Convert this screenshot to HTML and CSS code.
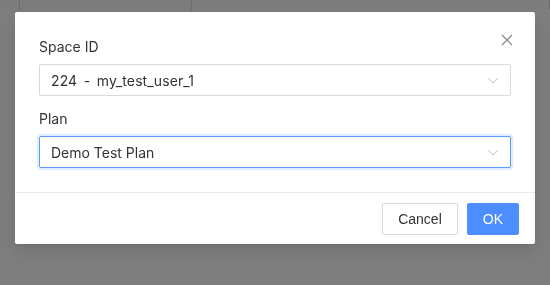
FILE: index.html
```html
<!DOCTYPE html>
<html>
<head>
<title>Select Space</title>
<link rel="stylesheet" href="styles.css">
</head>
<body>
<div class="page">
	<div class="pageHead">
		<div class="cell" style="width:19px"></div>
		<div class="cell" style="width:171px"></div>
		<div class="cell" style="width:358px"></div>
	</div>
</div>
<div class="mask">
	<div class="modal">
		<button class="close" type="button">
			<svg width="12" height="12" viewBox="0 0 12 12"><path d="M1 1L11 11M11 1L1 11" stroke="#8c8c8c" stroke-width="1.3" fill="none"/></svg>
		</button>
		<div class="body">
			<div class="field">
				<div class="label">Space ID</div>
				<div class="select">
					<span class="value spaced">224 - my_test_user_1</span>
					<svg class="arrow" width="12" height="7" viewBox="0 0 12 7"><path d="M1 1L6 6L11 1" stroke="#c4c4c4" stroke-width="1" fill="none"/></svg>
				</div>
			</div>
			<div class="field">
				<div class="label">Plan</div>
				<div class="select focused">
					<span class="value">Demo Test Plan</span>
					<svg class="arrow" width="12" height="7" viewBox="0 0 12 7"><path d="M1 1L6 6L11 1" stroke="#c4c4c4" stroke-width="1" fill="none"/></svg>
				</div>
			</div>
		</div>
		<div class="footer">
			<button class="btn" type="button">Cancel</button>
			<button class="btn primary" type="button">OK</button>
		</div>
	</div>
</div>
</body>
</html>
```
FILE: styles.css
```css
html,body{
	padding:0;
	margin:0;
	font-family:"Inter","Liberation Sans",sans-serif;
	background-color:#ffffff;
}
div.page{
	height:285px;
}
div.pageHead{
	display:flex;
	height:10px;
	background-color:#fafafa;
}
div.pageHead>div.cell{
	border-right:1px solid #d9d9d9;
}
div.mask{
	position:fixed;
	top:0;
	left:0;
	width:100%;
	height:100%;
	background-color:rgba(0,0,0,0.5);
	display:flex;
	justify-content:center;
	align-items:flex-start;
	padding-top:12px;
	box-sizing:border-box;
}
div.modal{
	position:relative;
	width:520px;
	background-color:#ffffff;
	border-radius:2px;
	box-shadow:0 3px 6px -4px rgba(0,0,0,0.12),0 6px 16px 0 rgba(0,0,0,0.08),0 9px 28px 8px rgba(0,0,0,0.05);
}
button.close{
	position:absolute;
	top:0;
	right:0;
	width:56px;
	height:56px;
	border:none;
	background:none;
	padding:0;
	display:flex;
	align-items:center;
	justify-content:center;
	cursor:pointer;
}
div.body{
	padding:24px 24px 12px 24px;
}
div.field{
	margin-bottom:12px;
}
div.label{
	font-size:14px;
	line-height:22px;
	color:#333333;
	margin-bottom:6px;
}
div.select{
	height:32px;
	box-sizing:border-box;
	border:1px solid #d9d9d9;
	border-radius:2px;
	padding:0 11px;
	display:flex;
	align-items:center;
	justify-content:space-between;
	font-size:14px;
	color:#333333;
}
span.value.spaced{
	word-spacing:2.5px;
	letter-spacing:0.1px;
}
div.select.focused{
	border-color:#5b9bfc;
	box-shadow:0 0 0 2px rgba(24,144,255,0.15);
}
div.footer{
	border-top:1px solid #ebebeb;
	padding:10px 16px 9px 16px;
	display:flex;
	justify-content:flex-end;
	gap:9px;
}
button.btn{
	height:32px;
	padding:0 15px;
	font-family:"Liberation Sans",Arial,sans-serif;
	font-size:14px;
	color:#333333;
	background-color:#ffffff;
	border:1px solid #d9d9d9;
	border-radius:2px;
	cursor:pointer;
}
button.btn.primary{
	min-width:52px;
	color:#ffffff;
	background-color:#4c8dff;
	border-color:#4c8dff;
}
```
